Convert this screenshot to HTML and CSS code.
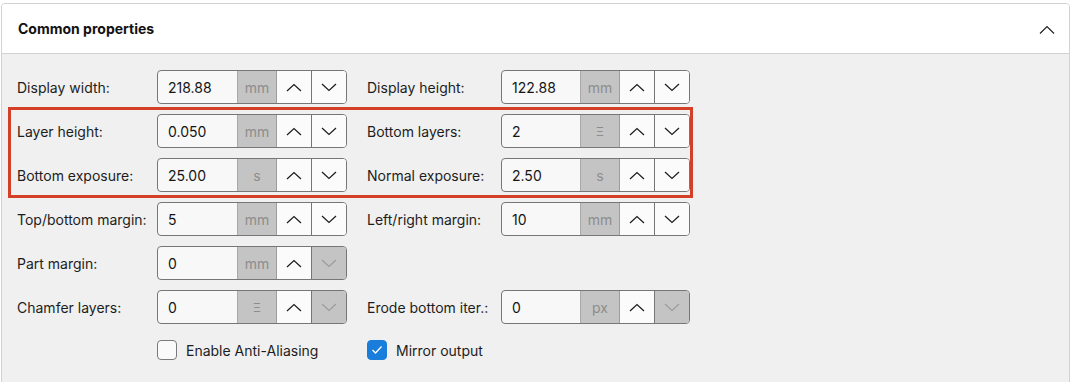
FILE: index.html
```html
<!DOCTYPE html>
<html lang="en">

<head>
    <meta charset="UTF-8">
    <title>Common properties</title>
    <link rel="stylesheet" href="styles.css">
</head>

<body>

    <div class="panel">
        <div class="panel-header">
            <span class="panel-title">Common properties</span>
            <svg class="collapse" width="16" height="9" viewBox="0 0 16 9"><polyline points="1,8.5 8,1.5 15,8.5" fill="none" stroke="#222" stroke-width="1.2"/></svg>
        </div>

        <div class="panel-body">
            <div class="field">
                <label>Display width:</label>
                <div class="spin">
                    <span class="value">218.88</span>
                    <span class="unit">mm</span>
                    <span class="btn"><svg width="16" height="9" viewBox="0 0 16 9"><polyline points="1,8 8,1.5 15,8"/></svg></span>
                    <span class="btn"><svg width="16" height="9" viewBox="0 0 16 9"><polyline points="1,1 8,7.5 15,1"/></svg></span>
                </div>
            </div>
            <div class="field">
                <label>Display height:</label>
                <div class="spin">
                    <span class="value">122.88</span>
                    <span class="unit">mm</span>
                    <span class="btn"><svg width="16" height="9" viewBox="0 0 16 9"><polyline points="1,8 8,1.5 15,8"/></svg></span>
                    <span class="btn"><svg width="16" height="9" viewBox="0 0 16 9"><polyline points="1,1 8,7.5 15,1"/></svg></span>
                </div>
            </div>

            <div class="field">
                <label>Layer height:</label>
                <div class="spin">
                    <span class="value">0.050</span>
                    <span class="unit">mm</span>
                    <span class="btn"><svg width="16" height="9" viewBox="0 0 16 9"><polyline points="1,8 8,1.5 15,8"/></svg></span>
                    <span class="btn"><svg width="16" height="9" viewBox="0 0 16 9"><polyline points="1,1 8,7.5 15,1"/></svg></span>
                </div>
            </div>
            <div class="field">
                <label>Bottom layers:</label>
                <div class="spin">
                    <span class="value">2</span>
                    <span class="unit unit-small">Ξ</span>
                    <span class="btn"><svg width="16" height="9" viewBox="0 0 16 9"><polyline points="1,8 8,1.5 15,8"/></svg></span>
                    <span class="btn"><svg width="16" height="9" viewBox="0 0 16 9"><polyline points="1,1 8,7.5 15,1"/></svg></span>
                </div>
            </div>

            <div class="field">
                <label>Bottom exposure:</label>
                <div class="spin">
                    <span class="value">25.00</span>
                    <span class="unit">s</span>
                    <span class="btn"><svg width="16" height="9" viewBox="0 0 16 9"><polyline points="1,8 8,1.5 15,8"/></svg></span>
                    <span class="btn"><svg width="16" height="9" viewBox="0 0 16 9"><polyline points="1,1 8,7.5 15,1"/></svg></span>
                </div>
            </div>
            <div class="field">
                <label>Normal exposure:</label>
                <div class="spin">
                    <span class="value">2.50</span>
                    <span class="unit">s</span>
                    <span class="btn"><svg width="16" height="9" viewBox="0 0 16 9"><polyline points="1,8 8,1.5 15,8"/></svg></span>
                    <span class="btn"><svg width="16" height="9" viewBox="0 0 16 9"><polyline points="1,1 8,7.5 15,1"/></svg></span>
                </div>
            </div>

            <div class="field">
                <label>Top/bottom margin:</label>
                <div class="spin">
                    <span class="value">5</span>
                    <span class="unit">mm</span>
                    <span class="btn"><svg width="16" height="9" viewBox="0 0 16 9"><polyline points="1,8 8,1.5 15,8"/></svg></span>
                    <span class="btn"><svg width="16" height="9" viewBox="0 0 16 9"><polyline points="1,1 8,7.5 15,1"/></svg></span>
                </div>
            </div>
            <div class="field">
                <label>Left/right margin:</label>
                <div class="spin">
                    <span class="value">10</span>
                    <span class="unit">mm</span>
                    <span class="btn"><svg width="16" height="9" viewBox="0 0 16 9"><polyline points="1,8 8,1.5 15,8"/></svg></span>
                    <span class="btn"><svg width="16" height="9" viewBox="0 0 16 9"><polyline points="1,1 8,7.5 15,1"/></svg></span>
                </div>
            </div>

            <div class="field">
                <label>Part margin:</label>
                <div class="spin">
                    <span class="value">0</span>
                    <span class="unit">mm</span>
                    <span class="btn"><svg width="16" height="9" viewBox="0 0 16 9"><polyline points="1,8 8,1.5 15,8"/></svg></span>
                    <span class="btn disabled"><svg width="16" height="9" viewBox="0 0 16 9"><polyline points="1,1 8,7.5 15,1"/></svg></span>
                </div>
            </div>
            <div class="field"></div>

            <div class="field">
                <label>Chamfer layers:</label>
                <div class="spin">
                    <span class="value">0</span>
                    <span class="unit unit-small">Ξ</span>
                    <span class="btn"><svg width="16" height="9" viewBox="0 0 16 9"><polyline points="1,8 8,1.5 15,8"/></svg></span>
                    <span class="btn disabled"><svg width="16" height="9" viewBox="0 0 16 9"><polyline points="1,1 8,7.5 15,1"/></svg></span>
                </div>
            </div>
            <div class="field">
                <label>Erode bottom iter.:</label>
                <div class="spin">
                    <span class="value">0</span>
                    <span class="unit">px</span>
                    <span class="btn"><svg width="16" height="9" viewBox="0 0 16 9"><polyline points="1,8 8,1.5 15,8"/></svg></span>
                    <span class="btn disabled"><svg width="16" height="9" viewBox="0 0 16 9"><polyline points="1,1 8,7.5 15,1"/></svg></span>
                </div>
            </div>

            <div class="field check-row">
                <label></label>
                <span class="check"><span class="box"></span>Enable Anti-Aliasing</span>
            </div>
            <div class="field check-row">
                <span class="check"><span class="box checked"><svg width="12" height="10" viewBox="0 0 12 10"><polyline points="1.5,5 4.5,8 10.5,1.5" fill="none" stroke="#fff" stroke-width="1.3"/></svg></span>Mirror output</span>
            </div>
        </div>
    </div>

    <!-- annotation drawn over the form -->
    <div class="highlight"></div>

</body>

</html>
```

FILE: styles.css
```css
body,
html {
    margin: 0;
    padding: 0;
    overflow: hidden;
}

body {
    background: #fff;
    font-family: Inter, "Liberation Sans", sans-serif;
    font-size: 14px;
    color: #1d1d1d;
    position: relative;
    height: 382px;
}

.panel {
    margin: 3px 0 0 1px;
    width: 1067px;
    height: 384px;
    border: 1px solid #d2d2d2;
    border-radius: 4px;
    background: #f0f0f0;
    overflow: hidden;
}

.panel-header {
    height: 49px;
    background: #fff;
    border-bottom: 1px solid #d2d2d2;
    display: flex;
    align-items: center;
    justify-content: space-between;
    padding: 0 14px 0 16px;
}

.panel-title {
    font-weight: 700;
    font-size: 14px;
    color: #111;
}

.collapse {
    margin-top: 1px;
}

.panel-body {
    display: grid;
    grid-template-columns: 330px 323px;
    column-gap: 20px;
    row-gap: 10px;
    padding: 16px 0 0 15px;
}

.field {
    display: flex;
    align-items: center;
    height: 34px;
}

.field label {
    width: 140px;
    flex: none;
}

.field:nth-child(even) label {
    width: 134px;
}

.spin {
    flex: 1;
    display: flex;
    height: 32px;
    border: 1px solid #767676;
    border-radius: 4px;
    overflow: hidden;
    background: #f8f8f8;
}

.value {
    flex: 1;
    display: flex;
    align-items: center;
    padding-left: 10px;
    color: #151515;
}

.unit {
    width: 38px;
    display: flex;
    align-items: center;
    justify-content: center;
    background: #c4c4c4;
    border-left: 1px solid #a9a9a9;
    border-right: 1px solid #9d9d9d;
    color: #8d8d8d;
}

.unit-small {
    font-size: 12px;
}

.btn {
    width: 34px;
    display: flex;
    align-items: center;
    justify-content: center;
    background: #fbfbfb;
    border-left: 1px solid #767676;
}

.unit + .btn {
    border-left: none;
}

.btn polyline {
    fill: none;
    stroke: #1c1c1c;
    stroke-width: 1.2;
}

.btn.disabled {
    background: #c4c4c4;
}

.btn.disabled polyline {
    stroke: #9c9c9c;
}

.check-row {
    height: 32px;
}

.check {
    display: flex;
    align-items: center;
    color: #1d1d1d;
}

.check .box {
    width: 18px;
    height: 18px;
    border: 1px solid #7a7a7a;
    border-radius: 4px;
    background: #fafafa;
    margin-right: 9px;
    display: flex;
    align-items: center;
    justify-content: center;
}

.check .box.checked {
    background: #1a7ddc;
    border-color: #1a7ddc;
}

.highlight {
    position: absolute;
    left: 8px;
    top: 107px;
    width: 679px;
    height: 85px;
    border: 3px solid #d33f27;
}
```
